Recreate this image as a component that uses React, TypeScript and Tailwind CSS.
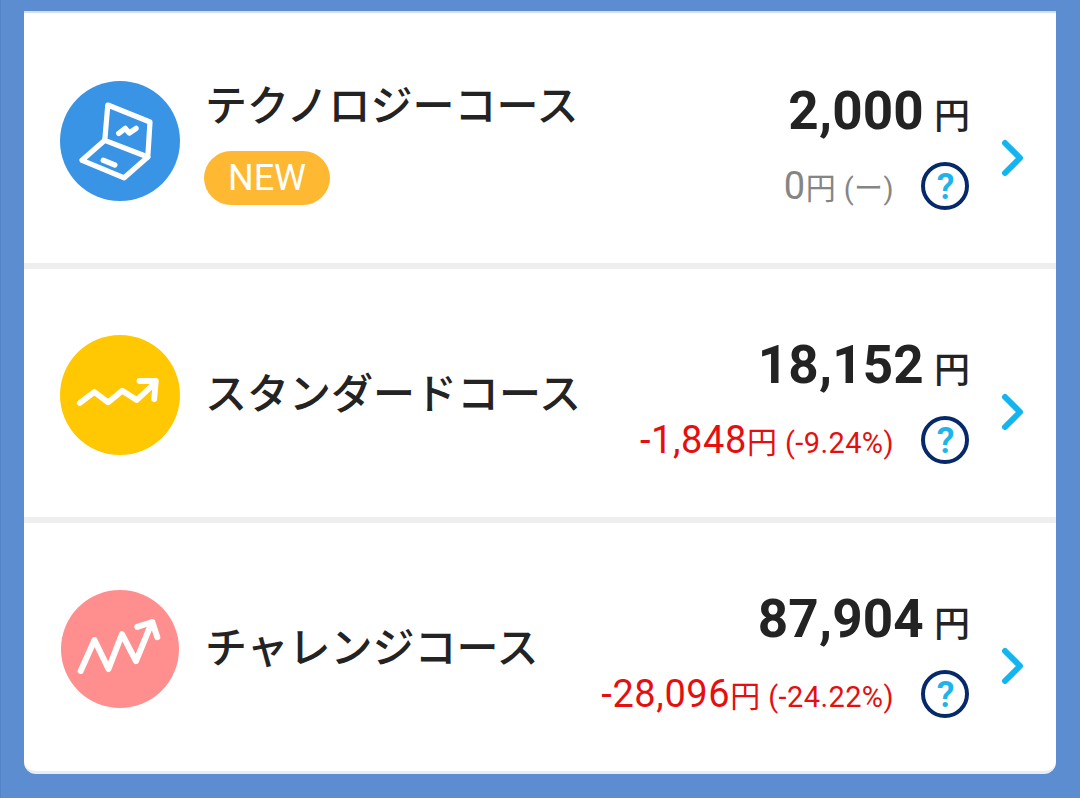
import React from 'react';

type Course = {
  id: string;
  name: string;
  isNew?: boolean;
  amount: string;
  diff: string;
  rate: string;
  diffColor: string;
  icon: React.FC;
};

const LaptopIcon: React.FC = () => (
  <svg viewBox="0 0 120 120" className="size-[120px] shrink-0" fill="none" stroke="#fff" strokeLinecap="round" strokeLinejoin="round">
    <circle cx="60" cy="60" r="60" fill="#3994e6" stroke="none" />
    <path d="M47.8 24 90 41 87.8 76 44.8 59.3Z" strokeWidth="5.2" />
    <path d="M44.8 59.3 22 79.3 64.2 96.8 87.8 76" strokeWidth="5.2" />
    <path d="M58.8 52.3 65.3 47.4 69.3 52 76 47.4" strokeWidth="5.4" />
    <path d="M43.3 79.3 54.8 84" strokeWidth="5.4" />
  </svg>
);

const StandardIcon: React.FC = () => (
  <svg viewBox="0 0 120 120" className="size-[120px] shrink-0" fill="none" stroke="#fff" strokeWidth="5.8" strokeLinecap="round" strokeLinejoin="round">
    <circle cx="60" cy="60" r="60" fill="#ffc802" stroke="none" />
    <path d="M19.8 68 34.3 57 48.2 67.3 62.2 55.8 76.8 65 95 48" />
    <path d="M79.5 46H95.8L94.2 64" />
  </svg>
);

const ChallengeIcon: React.FC = () => (
  <svg viewBox="0 0 120 120" className="size-[120px] shrink-0" fill="none" stroke="#fff" strokeWidth="6" strokeLinecap="round" strokeLinejoin="round">
    <circle cx="60" cy="60" r="59" fill="#ff8e8e" stroke="none" />
    <path d="M20.7 82 34.5 51 48.5 80 62 45.2 76 72.2 92 33" />
    <path d="M77.3 37.8 92.3 33 97.3 48.2" />
  </svg>
);

const courses: Course[] = [
  { id: 'technology', name: 'テクノロジーコース', isNew: true, amount: '2,000', diff: '0', rate: '(ー)', diffColor: 'text-[#858585]', icon: LaptopIcon },
  { id: 'standard', name: 'スタンダードコース', amount: '18,152', diff: '-1,848', rate: '(-9.24%)', diffColor: 'text-[#e60f0f]', icon: StandardIcon },
  { id: 'challenge', name: 'チャレンジコース', amount: '87,904', diff: '-28,096', rate: '(-24.22%)', diffColor: 'text-[#e60f0f]', icon: ChallengeIcon },
];

const CourseRow: React.FC<{ course: Course }> = ({ course }) => (
  <li className="flex h-[254px] items-start border-b-6 border-[#eeeeee] pt-[66px] pl-9 last:border-b-0">
    <course.icon />

    <div className={`flex h-[120px] flex-col items-start pl-6 ${course.isNew ? 'pt-0.5' : 'pt-9'}`}>
      <h2 className="pl-px text-[42px] leading-[48px] font-medium whitespace-nowrap text-[#232323]">
        {course.name}
      </h2>
      {course.isNew && (
        <span className="mt-5 flex h-[54px] w-[126px] shrink-0 items-center justify-center rounded-full bg-[#ffb831] text-[36px] leading-none text-white">
          NEW
        </span>
      )}
    </div>

    <div className="ml-auto flex flex-col items-end">
      <p className="-mr-px flex items-baseline leading-[60px] text-[#232323]">
        <span className="text-[53px] font-bold tracking-[0.2px]">{course.amount}</span>
        <span className="ml-[10px] text-[36px] font-medium">円</span>
      </p>
      <div className="mt-[15px] flex h-12 items-center">
        <p className={`flex items-baseline pt-[3px] leading-[48px] whitespace-nowrap ${course.diffColor}`}>
          <span className="text-[38px] tracking-[0.6px]">{course.diff}</span>
          <span className="text-[30px]">円</span>
          <span className="ml-2 text-[29px] tracking-[0.4px]">{course.rate}</span>
        </p>
        <button className="ml-[27px] flex size-12 items-center justify-center rounded-full border-4 border-[#06296a] pt-0.5 pl-px text-[36px] leading-none font-semibold text-[#1cb4ea]">
          ?
        </button>
      </div>
    </div>

    <svg viewBox="0 0 24 40" className="mt-[57px] mr-[32px] ml-[31px] h-10 w-6 shrink-0" fill="none" stroke="#12b5ee" strokeWidth="6" strokeLinecap="round" strokeLinejoin="round">
      <path d="M5 5 20 20 5 35" />
    </svg>
  </li>
);

export default function App() {
  return (
    <main className="h-[798px] overflow-hidden border-l border-[#5383c4] bg-[#5b8dd0] pt-[11px] pr-6 pl-[23px] font-['Roboto','Noto_Sans_CJK_JP',sans-serif]">
      <ul className="h-[763px] overflow-hidden rounded-b-xl border-t-2 border-b-3 border-t-[#d5e1f2] border-b-[#e6edf5] bg-white pt-0.5">
        {courses.map((course) => (
          <CourseRow key={course.id} course={course} />
        ))}
      </ul>
    </main>
  );
}
